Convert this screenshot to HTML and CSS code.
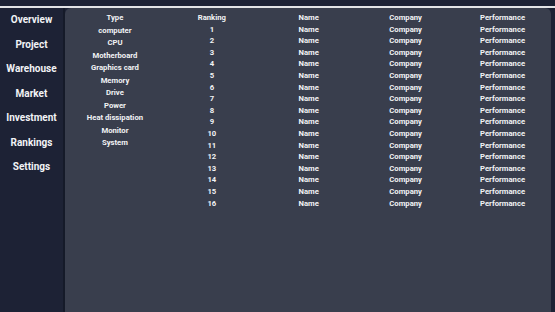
FILE: index.html
```html
<!DOCTYPE html>
<html>
<head>
<meta charset="utf-8">
<link rel="stylesheet" href="styles.css">
</head>
<body>
<div class="header"></div>
<div class="rule"></div>
<div class="main">
  <nav class="sidebar">
    <div class="nav-item">Overview</div>
    <div class="nav-item">Project</div>
    <div class="nav-item">Warehouse</div>
    <div class="nav-item">Market</div>
    <div class="nav-item">Investment</div>
    <div class="nav-item">Rankings</div>
    <div class="nav-item">Settings</div>
  </nav>
  <section class="panel">
    <div class="types">
      <div class="type">Type</div>
      <div class="type">computer</div>
      <div class="type">CPU</div>
      <div class="type">Motherboard</div>
      <div class="type">Graphics card</div>
      <div class="type">Memory</div>
      <div class="type">Drive</div>
      <div class="type">Power</div>
      <div class="type">Heat dissipation</div>
      <div class="type">Monitor</div>
      <div class="type">System</div>
    </div>
    <div class="table" id="table">
      <div class="cell">Ranking</div><div class="cell">Name</div><div class="cell">Company</div><div class="cell">Performance</div>
    </div>
  </section>
</div>
<script src="script.js"></script>
</body>
</html>
```
FILE: script.js
```js
var t = document.getElementById('table');
for (var i = 1; i <= 16; i++) {
  var vals = [String(i), 'Name', 'Company', 'Performance'];
  for (var j = 0; j < 4; j++) {
    var d = document.createElement('div');
    d.className = 'cell';
    d.textContent = vals[j];
    t.appendChild(d);
  }
}
```
FILE: styles.css
```css
html, body {
  margin: 0;
  height: 100%;
}
body {
  background: #1d2235;
  font-family: Roboto, "Liberation Sans", sans-serif;
  font-weight: 700;
  color: #f2f3f5;
  overflow: hidden;
  display: flex;
  flex-direction: column;
}
.header {
  height: 6px;
  background: #1d2235;
}
.rule {
  height: 2px;
  background: #e2e3e6;
}
.main {
  flex: 1;
  display: flex;
}
.sidebar {
  width: 63px;
  border-right: 2px solid #151a29;
  display: flex;
  flex-direction: column;
}
.nav-item {
  height: 24.5px;
  line-height: 24.5px;
  text-align: center;
  font-size: 10px;
  white-space: nowrap;
}
.panel {
  flex: 1;
  margin-right: 4px;
  background: #393e4d;
  border-radius: 6px 6px 0 0;
  display: grid;
  grid-template-columns: 1fr 4fr;
  padding: 4px 0 0 1.5px;
  align-content: start;
}
.types {
  display: flex;
  flex-direction: column;
}
.type {
  height: 12.5px;
  line-height: 12.5px;
  text-align: center;
  font-size: 7.7px;
  white-space: nowrap;
}
.table {
  display: grid;
  grid-template-columns: repeat(4, 1fr);
  grid-auto-rows: 11.6px;
}
.cell {
  line-height: 11.6px;
  text-align: center;
  font-size: 7.7px;
  white-space: nowrap;
}
```
